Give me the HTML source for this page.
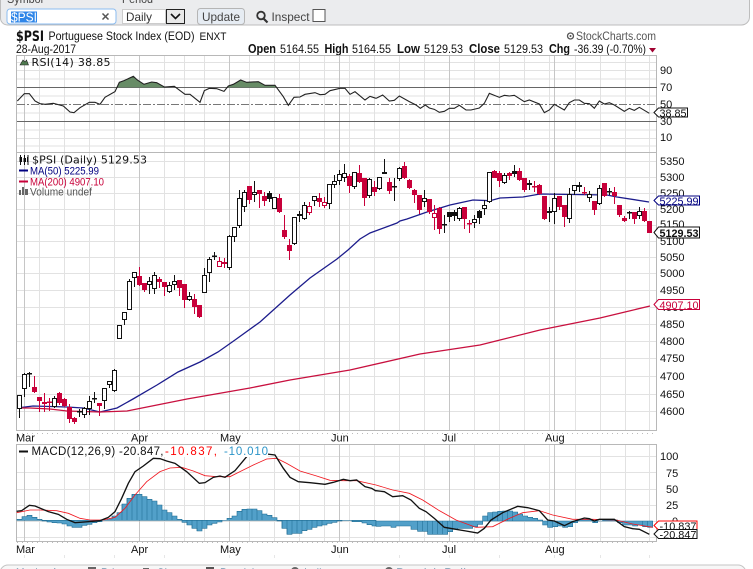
<!DOCTYPE html>
<html>
<head>
<meta charset="utf-8">
<title>$PSI</title>
<style>
html,body{margin:0;padding:0;background:#fff;width:753px;height:569px;overflow:hidden}
svg{display:block;position:absolute;left:0;top:0}
text{font-family:"Liberation Sans",sans-serif;fill:#111}
.ax{font-size:11px}
.b{font-weight:bold;font-size:13px}
.v{font-size:12px}
</style>
</head>
<body>
<svg width="753" height="569" viewBox="0 0 753 569" xmlns="http://www.w3.org/2000/svg">
<!-- top toolbar -->
<path d="M-2 -2H749.500V17a8 8 0 0 1-8 8H7.500a7 7 0 0 1-7-7V-2z" fill="#ebecee" stroke="#bdbdbd"/>
<text x="7" y="3" font-size="12" style="fill:#444" textLength="36" lengthAdjust="spacingAndGlyphs">Symbol</text>
<rect x="7" y="9" width="109" height="15" rx="3" fill="#fff" stroke="#8bbcf0"/>
<rect x="11" y="11.500" width="26" height="11" fill="#2f86e8"/>
<text x="11" y="21.500" font-size="13" style="fill:#fff" textLength="26" lengthAdjust="spacingAndGlyphs">$PSI</text>
<path d="M102.500 13.500l6 6M108.500 13.500l-6 6" stroke="#555" stroke-width="1.500" fill="none"/>
<text x="122" y="3" font-size="12" style="fill:#444" textLength="31" lengthAdjust="spacingAndGlyphs">Period</text>
<rect x="122.500" y="9.500" width="43" height="14" fill="#fff" stroke="#ccc"/>
<text x="126" y="21" font-size="12" style="fill:#333" textLength="26" lengthAdjust="spacingAndGlyphs">Daily</text>
<rect x="166.500" y="9.500" width="18" height="14" fill="#e8e8e8" stroke="#222"/>
<path d="M171 14l4.500 4.500 4.500-4.500" stroke="#111" stroke-width="1.600" fill="none"/>
<rect x="197.500" y="8.500" width="47" height="16" rx="3" fill="#e6ecf3" stroke="#b5b5b5"/>
<text x="202" y="21" font-size="12" style="fill:#444" textLength="38" lengthAdjust="spacingAndGlyphs">Update</text>
<circle cx="261" cy="15.500" r="3.800" fill="none" stroke="#333" stroke-width="1.800"/>
<path d="M263.500 18.500l4 4" stroke="#333" stroke-width="2.200"/>
<text x="271.500" y="21" font-size="12" style="fill:#444" textLength="38" lengthAdjust="spacingAndGlyphs">Inspect</text>
<rect x="313" y="9.500" width="12" height="12" fill="#fff" stroke="#555"/>

<!-- heading -->
<text x="16" y="41" font-size="14" font-weight="bold" style="font-family:'DejaVu Sans',sans-serif" textLength="28" lengthAdjust="spacingAndGlyphs">$PSI</text>
<text x="48.500" y="40" font-size="12" textLength="146" lengthAdjust="spacingAndGlyphs">Portuguese Stock Index (EOD)</text>
<text x="199.500" y="40" font-size="11" textLength="27" lengthAdjust="spacingAndGlyphs">ENXT</text>
<circle cx="570.500" cy="36" r="3" fill="none" stroke="#555" stroke-width="1.300"/>
<circle cx="570.500" cy="36" r="1" fill="#555"/>
<text x="576" y="40" font-size="12" style="fill:#555" textLength="80" lengthAdjust="spacingAndGlyphs">StockCharts.com</text>
<text x="16" y="53" font-size="11.500" textLength="60" lengthAdjust="spacingAndGlyphs">28-Aug-2017</text>
<text x="248" y="53" class="b" textLength="28" lengthAdjust="spacingAndGlyphs">Open</text>
<text x="280" y="53" class="v" textLength="39" lengthAdjust="spacingAndGlyphs">5164.55</text>
<text x="324.500" y="53" class="b" textLength="24" lengthAdjust="spacingAndGlyphs">High</text>
<text x="352" y="53" class="v" textLength="39" lengthAdjust="spacingAndGlyphs">5164.55</text>
<text x="397" y="53" class="b" textLength="23" lengthAdjust="spacingAndGlyphs">Low</text>
<text x="424" y="53" class="v" textLength="39" lengthAdjust="spacingAndGlyphs">5129.53</text>
<text x="469" y="53" class="b" textLength="31" lengthAdjust="spacingAndGlyphs">Close</text>
<text x="504" y="53" class="v" textLength="39" lengthAdjust="spacingAndGlyphs">5129.53</text>
<text x="549" y="53" class="b" textLength="21" lengthAdjust="spacingAndGlyphs">Chg</text>
<text x="574" y="53" class="v" textLength="72" lengthAdjust="spacingAndGlyphs">-36.39 (-0.70%)</text>
<path d="M649 48h7l-3.500 4.500z" fill="#a00030"/>

<!-- grid minor -->
<g fill="none" stroke="#e2e2e2" stroke-width="1">
<path d="M17 62.500H657M17 79H657M17 96H657M17 113H657M17 130H657M17 138.500H657M17 146H657M17 70.500H657"/>
<path d="M17 161.500H657M17 177.500H657M17 193.500H657M17 209.500H657M17 225.500H657M17 241.500H657M17 257.500H657M17 273.500H657M17 290.500H657M17 307.500H657M17 324.500H657M17 341.500H657M17 358.500H657M17 376.500H657M17 394.500H657M17 411.500H657"/>
<path d="M17 456.500H657M17 472.500H657M17 489.500H657M17 505.500H657M17 521.500H657M17 537.500H657"/>
<path d="M39.500 55V430M64.500 55V430M89.500 55V430M114.500 55V430M164.500 55V430M184.500 55V430M204.500 55V430M249.500 55V430M274.500 55V430M299.500 55V430M324.500 55V430M349.500 55V430M374.500 55V430M399.500 55V430M424.500 55V430M474.500 55V430M499.500 55V430M524.500 55V430M549.500 55V430M575.500 55V430M600.500 55V430M625.500 55V430M649.500 55V430"/>
<path d="M39.500 445V541M64.500 445V541M89.500 445V541M114.500 445V541M164.500 445V541M184.500 445V541M204.500 445V541M249.500 445V541M274.500 445V541M299.500 445V541M324.500 445V541M349.500 445V541M374.500 445V541M399.500 445V541M424.500 445V541M474.500 445V541M499.500 445V541M524.500 445V541M549.500 445V541M575.500 445V541M600.500 445V541M625.500 445V541M649.500 445V541"/>
</g>
<!-- grid major -->
<path d="M24.500 55V430M139.500 55V430M229.500 55V430M339.500 55V430M449.500 55V430M554.500 55V430M24.500 445V541M139.500 445V541M229.500 445V541M339.500 445V541M449.500 445V541M554.500 445V541" stroke="#c6c6c6" fill="none"/>
<!-- frames -->
<path d="M16.500 55.500H657M16.500 152.500H657M16.500 430.500H657M16.500 444.500H657M16.500 541.500H657M16.500 55V431M16.500 444V542M656.500 55V431M656.500 444V542" stroke="#b8b8b8" fill="none"/>
<path d="M17 433.500H657M17 542.500H657" stroke="#bbb" stroke-dasharray="1 4" fill="none"/>
<path d="M24.500 555V558M64.500 555V558M114.500 555V558M164.500 555V558M229.500 555V558M274.500 555V558M339.500 555V558M399.500 555V558M449.500 555V558M499.500 555V558M554.500 555V558M600.500 555V558M649.500 555V558" stroke="#e6e6e6" fill="none"/>

<!-- RSI -->
<path d="M17 87.500H657M17 121.500H657" stroke="#666" fill="none"/>
<path d="M17 104.500H657" stroke="#777" stroke-dasharray="8 2 2 2" fill="none"/>
<g transform="scale(.33333)">
<path d="M352 262L358 247 372 242 400 229 412 240 432 253 455 246 470 248 493 262zM680 262L685 258 700 253 722 240 740 247 775 245 795 256 825 256 830 262z" fill="#678c66"/>
<path d="M52 303L73 281 88 281 105 303 120 311 135 313 160 310 190 318 210 336 222 338 240 323 268 307 285 307 300 313 315 292 345 275 358 247 372 242 400 229 412 240 432 253 455 246 470 248 493 261 523 259 555 283 570 283 600 307 613 272 628 265 650 266 672 274 685 258 700 253 722 240 740 247 775 245 795 256 825 256 850 290 865 316 882 292 900 291 915 283 945 278 960 284 975 283 990 272 1020 265 1035 265 1050 283 1065 275 1095 300 1110 289 1128 295" fill="none" stroke="#222" stroke-width="3.300"/>
</g>
<g transform="translate(376 0) scale(.33333)">
<path d="M0 295L20 285 40 303 55 301 70 288 100 305 120 315 133 325 148 315 160 324 175 328 190 337 205 334 220 325 235 325 250 316 270 330 285 330 310 324 325 310 340 280 370 292 385 286 400 288 415 286 445 305 460 300 490 312 505 338 520 330 535 313 565 330 580 308 595 300 610 300 625 310 640 311 655 325 670 303 685 312 700 308 715 315 745 334 760 325 775 331 790 322 820 340" fill="none" stroke="#222" stroke-width="3.300"/>
</g>
<path d="M20 65l3-5 2 2 1.500-2 2 5z" fill="#4f7a4f" stroke="#222" stroke-width=".6"/>
<text x="31.500" y="66" font-size="11" style="font-family:'DejaVu Sans',sans-serif" textLength="79" lengthAdjust="spacing">RSI(14) 38.85</text>

<!-- MA lines -->
<path d="M17 408L33 406 67 407 83 408 100 412 117 408 133 399 157 385 178 372 200 362 218 352 235 340 260 322 290 295 310 278 337 259 348 250 360 239 370 233 397 223 400 221 407 219 427 212 450 205 473 200 490 200.700 500 198 523 197 540 194 607 195 617 197 649 202" fill="none" stroke="#1c1c8c" stroke-width="1.300"/>
<path d="M17 408L30 408 50 409 67 411 100 412 127 411 147 407 187 399 250 388 290 380 350 370 420 354 480 345 500 340 540 330 600 318 625 312 650 306" fill="none" stroke="#c8103f" stroke-width="1.300"/>

<!-- candles: black wicks -->
<path fill="none" stroke="#111" stroke-width="1" d="M19.500 395V418M24.500 373V397M29.500 372V387M54.500 396V408M79.500 409V417M84.500 407V418M89.500 396V415M94.500 392V403M104.500 388V409M109.500 381V388M114.500 369V392M119.500 325V339M124.500 312V325M129.500 279V310M134.500 272V287M149.500 277V294M154.500 272V294M169.500 282V293M174.500 275V290M189.500 292V301M204.500 268V293M209.500 257V282M214.500 252V260M229.500 235V270M234.500 227V242M239.500 190V228M244.500 190V212M254.500 181V202M269.500 191V202M274.500 197V209M294.500 217V245M299.500 211V222M304.500 202V220M314.500 196V206M329.500 184V209M334.500 175V188M339.500 170V185M344.500 164V182M354.500 172V189M369.500 178V198M379.500 177V190M384.500 159V174M394.500 178V201M399.500 167V181M424.500 190V207M444.500 215V233M449.500 212V222M454.500 210V221M459.500 207V221M474.500 215V228M479.500 210V224M484.500 200V215M489.500 172V203M504.500 173V184M514.500 165V177M529.500 180V190M549.500 207V222M554.500 193V224M569.500 188V223M574.500 185V195M579.500 182V192M589.500 191V202M599.500 185V205M609.500 188V195M629.500 211V219M639.500 207V219"/>
<!-- red wicks -->
<path fill="none" stroke="#c8003a" stroke-width="1" d="M34.500 376V393M39.500 397V412M44.500 393V412M49.500 398V411M59.500 392V405M64.500 398V407M69.500 404V423M74.500 417V424M99.500 403V416M139.500 267V286M144.500 283V292M159.500 277V288M164.500 282V296M179.500 280V296M184.500 284V308M194.500 294V314M199.500 305V318M219.500 257V267M224.500 258V268M249.500 186V204M259.500 190V208M264.500 192V206M279.500 194V213M284.500 215V239M289.500 239V260M309.500 202V215M319.500 193V207M324.500 197V208M349.500 174V193M359.500 165V183M364.500 178V206M374.500 181V196M389.500 178V194M404.500 162V179M409.500 179V189M414.500 189V203M419.500 195V214M429.500 199V214M434.500 205V230M439.500 207V234M464.500 207V229M469.500 220V233M494.500 170V178M499.500 171V187M509.500 172V180M519.500 168V181M524.500 178V192M534.500 181V192M539.500 184V195M544.500 196V220M559.500 196V210M564.500 205V227M584.500 187V195M594.500 201V215M604.500 183V197M614.500 187V204M619.500 205V217M624.500 216V222M634.500 212V224M644.500 208V222M649.500 221V233"/>
<!-- hollow black bodies -->
<path fill="#fff" stroke="#111" stroke-width="1" d="M17.500 395.500h4v13h-4zM22.500 374.500h4v14h-4zM52.500 398.500h4v8h-4zM82.500 408.500h4v6h-4zM87.500 401.500h4v7h-4zM102.500 388.500h4v12h-4zM107.500 381.500h4v3h-4zM112.500 370.500h4v20h-4zM117.500 325.500h4v13h-4zM122.500 312.500h4v7h-4zM127.500 281.500h4v28h-4zM132.500 272.500h4v5h-4zM147.500 281.500h4v3h-4zM152.500 275.500h4v13h-4zM167.500 285.500h4v6h-4zM172.500 281.500h4v3h-4zM187.500 296.500h4v3h-4zM202.500 275.500h4v17h-4zM207.500 259.500h4v13h-4zM227.500 236.500h4v31h-4zM232.500 227.500h4v9h-4zM237.500 198.500h4v27h-4zM242.500 192.500h4v14h-4zM252.500 192.500h4v2h-4zM272.500 197.500h4v11h-4zM292.500 217.500h4v26h-4zM302.500 205.500h4v13h-4zM312.500 196.500h4v4h-4zM327.500 184.500h4v19h-4zM332.500 181.500h4v3h-4zM337.500 174.500h4v6h-4zM342.500 173.500h4v4h-4zM352.500 172.500h4v14h-4zM367.500 179.500h4v16h-4zM377.500 177.500h4v11h-4zM397.500 168.500h4v10h-4zM422.500 198.500h4v3h-4zM457.500 208.500h4v10h-4zM472.500 219.500h4v3h-4zM482.500 205.500h4v3h-4zM487.500 172.500h4v29h-4zM502.500 175.500h4v7h-4zM527.500 183.500h4v1h-4zM552.500 198.500h4v13h-4zM567.500 194.500h4v24h-4zM572.500 185.500h4v5h-4zM577.500 185.500h4v1h-4zM587.500 194.500h4v3h-4zM597.500 188.500h4v15h-4zM637.500 211.500h4v4h-4z"/>
<!-- solid black bodies -->
<path fill="#111" d="M27 373h5v1.500h-5zM77 411h5v1.500h-5zM92 398h5v1.500h-5zM212 255.500h5v1.500h-5zM267 193h5v6h-5zM297 214h5v2h-5zM382 172h5v2h-5zM392 186h5v1.500h-5zM442 224h5v1.500h-5zM447 212h5v5h-5zM452 212h5v4h-5zM477 211h5v7h-5zM512 171h5v3h-5zM547 211h5v2h-5zM607 191h5v1.500h-5zM627 212h5v1.500h-5z"/>
<!-- solid red bodies -->
<path fill="#c8003a" d="M32 387h5v5h-5zM37 397h5v4h-5zM47 401.500h5v1.500h-5zM57 393h5v10h-5zM62 399h5v7h-5zM67 407h5v12h-5zM72 418h5v4h-5zM97 403h5v3h-5zM137 276h5v9h-5zM142 283h5v7h-5zM157 279h5v3h-5zM162 282h5v5h-5zM177 280h5v8h-5zM182 284h5v16h-5zM192 299h5v8h-5zM197 305h5v12h-5zM222 262h5v2h-5zM247 186h5v14h-5zM257 190h5v4h-5zM262 196h5v5h-5zM277 198h5v14h-5zM282 230h5v7h-5zM287 245h5v6h-5zM317 198h5v4h-5zM347 176h5v10h-5zM357 173h5v9h-5zM362 178h5v20h-5zM372 187h5v5h-5zM387 182h5v9h-5zM402 166h5v12h-5zM407 180h5v8h-5zM412 190h5v5h-5zM417 195h5v15h-5zM427 199h5v13h-5zM437 208h5v21h-5zM462 207h5v12h-5zM467 223h5v1.500h-5zM492 171h5v7h-5zM497 173h5v8h-5zM507 173h5v3h-5zM517 171h5v9h-5zM522 178h5v12h-5zM532 186h5v1.500h-5zM537 185h5v9h-5zM542 196h5v23h-5zM557 196h5v11h-5zM562 205h5v12h-5zM582 192h5v1.500h-5zM592 201h5v9h-5zM602 183h5v13h-5zM612 192h5v4h-5zM617 205h5v10h-5zM622 218h5v3h-5zM632 212h5v7h-5zM642 211h5v10h-5zM647 221h5v12h-5z"/>
<!-- hollow red bodies -->
<path fill="#fff" stroke="#c8003a" stroke-width="1" d="M42.500 402.500h4v1h-4zM217.500 261.500h4v5h-4zM307.500 206.500h4v6h-4zM322.500 202.500h4v3h-4zM432.500 213.500h4v4h-4z"/>

<!-- price legend -->
<path d="M20.500 155V165M24.500 155V165M28 155V165" stroke="#111" fill="none"/>
<path d="M19.500 157h2.500v5h-2.500zM23.500 158h2.500v4h-2.500zM27 157h1.500v5h-1.500z" fill="#111"/>
<text x="32" y="163.500" font-size="11" style="font-family:'DejaVu Sans',sans-serif" textLength="115" lengthAdjust="spacing">$PSI (Daily) 5129.53</text>
<rect x="19" y="169.500" width="9" height="2" fill="#000080"/>
<text x="30" y="174.500" font-size="11" style="fill:#000080" textLength="69" lengthAdjust="spacingAndGlyphs">MA(50) 5225.99</text>
<rect x="19" y="180.500" width="9" height="2" fill="#c8003a"/>
<text x="30" y="185.500" font-size="11" style="fill:#c8003a" textLength="74" lengthAdjust="spacingAndGlyphs">MA(200) 4907.10</text>
<path d="M19 195v-5h2v5zM22 195v-8h2v8zM25 195v-6h3v6z" fill="#666"/>
<text x="30" y="195.500" font-size="11" style="fill:#555" textLength="62" lengthAdjust="spacingAndGlyphs">Volume undef</text>

<!-- MACD histogram -->
<g transform="translate(0 440) scale(.33333)">
<path fill="#52a0c9" stroke="#1f6c93" stroke-width="1.800" d="M51 241V238H66V230H81V226H96V232H111V238H126V243H141V246H156V248H171V249H186V252H201V258H216V262H231V262H246V256H261V253H276V248H291V245H306V241H321V237H336V228H351V218H366V192H381V175H396V163H411V163H426V170H441V178H456V183H471V195H486V210H501V218H516V228H531V238H546V241V247H561V255H576V265H591V273H606V265H621V255H636V250H651V246H666V241H681V235H696V228H711V214H726V208H741V207H771V212H786V222H801V226H816V233H831V241V243H846V265H861V283H876V280H906V272H921V268H936V262H951V258H966V255H981V250H996V247H1011V243H1026V241H1056V245H1086V249H1101V254H1116V258H1128V241z"/>
<path fill="none" stroke="#1f6c93" stroke-width="1.600" d="M366 241V192M381 241V175M396 241V163M411 241V163M426 241V170M441 241V178M456 241V183M471 241V195M486 241V210M501 241V218M516 241V228M561 241V255M576 241V265M591 241V273M606 241V265M621 241V255M726 241V208M741 241V207M756 241V207M771 241V212M786 241V222M846 241V265M861 241V283M876 241V280M891 241V280M906 241V272M921 241V268M936 241V262M951 241V258M966 241V255"/>
<path fill="none" stroke="#f01820" stroke-width="2.500" d="M50 218L90 210 120 210 170 212 205 220 240 235 270 240 310 240 345 232 375 205 405 165 440 125 480 95 510 84 545 82 580 93 615 107 650 110 690 110 720 95 760 75 800 57 830 55 860 70 900 93 950 108 990 121 1030 122 1070 122 1128 135"/>
<path fill="none" stroke="#111" stroke-width="4" d="M50 214L65 212 88 196 105 198 145 215 175 223 200 238 225 248 265 245 300 242 325 232 345 215 365 175 385 130 405 95 430 78 460 55 480 56 500 63 525 70 560 95 598 130 615 128 640 112 660 108 675 112 705 92 740 50 770 35 800 42 825 45 850 85 870 112 895 125 930 128 975 133 1000 127 1030 118 1050 122 1070 120 1095 140 1115 145 1128 153"/>
</g>
<g transform="translate(376 440) scale(.33333)">
<path fill="#52a0c9" stroke="#1f6c93" stroke-width="1.800" d="M0 243V259H15V258H45V262H60V258H105V268H125V274H155V283H215V275H230V268H245V265H290V260H305V253H320V243V228H335V218H350V216H365V214H380V213H410V216H425V222H440V228H455V232H470V235H485V240H500V255H515V262H530V260H545V258H560V262H575V260H590V248H605V238H650V248H665V243H680V240H725V248H740V255H770V258H785V255H800V260H815V262H830V243z"/>
<path fill="none" stroke="#1f6c93" stroke-width="1.600" d="M125 243V274M140 243V274M155 243V283M170 243V283M185 243V283M200 243V283M215 243V275M230 243V268M335 243V228M350 243V218M365 243V216M380 243V214M395 243V213M410 243V216M515 243V262M530 243V260M545 243V258M800 243V260M815 243V262"/>
<path fill="none" stroke="#f01820" stroke-width="2.500" d="M0 135L50 150 100 160 140 180 190 212 240 240 300 262 350 260 400 235 440 218 490 212 530 225 590 238 650 238 720 240 770 252 830 262"/>
<path fill="none" stroke="#111" stroke-width="4" d="M0 152L25 155 50 170 80 167 105 180 130 205 150 215 175 235 205 262 240 268 270 273 305 279 325 265 345 240 380 218 425 199 455 203 490 212 515 240 535 243 565 257 590 245 625 234 640 236 655 243 670 238 715 238 745 260 770 266 790 268 820 283"/>
</g>
<!-- MACD legend -->
<rect x="17" y="445" width="251" height="12" fill="#fff"/>
<rect x="19" y="450.500" width="9" height="2" fill="#111"/>
<text x="31.500" y="455" font-size="11.500" textLength="132" lengthAdjust="spacing">MACD(12,26,9) -20.847,</text>
<text x="165" y="455" font-size="11.500" style="fill:#f00" textLength="52" lengthAdjust="spacing">-10.837,</text>
<text x="224" y="455" font-size="11.500" style="fill:#2a94c8" textLength="44" lengthAdjust="spacing">-10.010</text>

<!-- axis labels -->
<g class="ax">
<text x="660" y="74">90</text><text x="660" y="91">70</text><text x="660" y="108">50</text><text x="660" y="125">30</text><text x="660" y="141">10</text>
<text x="660" y="165">5350</text><text x="660" y="181">5300</text><text x="660" y="197">5250</text><text x="660" y="213">5200</text><text x="660" y="228">5150</text><text x="660" y="245">5100</text><text x="660" y="261">5050</text><text x="660" y="277">5000</text><text x="660" y="294">4950</text><text x="660" y="311">4900</text><text x="660" y="328">4850</text><text x="660" y="345">4800</text><text x="660" y="362">4750</text><text x="660" y="380">4700</text><text x="660" y="398">4650</text><text x="660" y="415">4600</text>
<text x="660" y="460">100</text><text x="666" y="477">75</text><text x="666" y="493">50</text><text x="666" y="509">25</text><text x="672" y="525">0</text>
<text x="16" y="441.500">Mar</text><text x="131" y="441.500">Apr</text><text x="220" y="441.500">May</text><text x="331" y="441.500">Jun</text><text x="442" y="441.500">Jul</text><text x="545" y="441.500">Aug</text>
<text x="16" y="553">Mar</text><text x="131" y="553">Apr</text><text x="220" y="553">May</text><text x="331" y="553">Jun</text><text x="442" y="553">Jul</text><text x="545" y="553">Aug</text>
</g>

<!-- value tags -->
<path d="M654 112.500l4.500-4.500H687.500v9H658.500z" fill="#fff" stroke="#111"/>
<text x="659.500" y="117" font-size="11" textLength="27" lengthAdjust="spacingAndGlyphs">38.85</text>
<path d="M654 200.500l4.500-4.500H699.500v9H658.500z" fill="#fff" stroke="#000080"/>
<text x="659.500" y="205" font-size="11" style="fill:#000080" textLength="39" lengthAdjust="spacingAndGlyphs">5225.99</text>
<path d="M654 232.500l4.500-5.500H699.500v11H658.500z" fill="#fff" stroke="#111"/>
<text x="659.500" y="237" font-size="11" font-weight="bold" textLength="39" lengthAdjust="spacingAndGlyphs">5129.53</text>
<path d="M654 304.500l4.500-5H699.500v10H658.500z" fill="#fff" stroke="#c8003a"/>
<text x="659.500" y="309" font-size="11" style="fill:#c8003a" textLength="39" lengthAdjust="spacingAndGlyphs">4907.10</text>
<path d="M654 525.500l4.500-4.500H697v9H658.500z" fill="#fff" stroke="#f00"/>
<text x="659.500" y="530" font-size="11" textLength="37" lengthAdjust="spacingAndGlyphs">-10.837</text>
<path d="M654 534l4.500-4.500H697v9H658.500z" fill="#fff" stroke="#111"/>
<text x="659.500" y="538.500" font-size="11" textLength="37" lengthAdjust="spacingAndGlyphs">-20.847</text>

<!-- bottom panel -->
<path d="M0 575v-2a8 8 0 0 1 8-8H738a8 8 0 0 1 8 8v2" fill="#f7f7f7" stroke="#c4c4c4"/>
<g font-size="12">
<text x="16" y="577" style="fill:#2a5f86" textLength="47" lengthAdjust="spacingAndGlyphs">Moving Av</text>
<text x="101" y="577" style="fill:#2a5f86" textLength="25" lengthAdjust="spacingAndGlyphs">Price</text>
<text x="157" y="577" style="fill:#2a5f86" textLength="30" lengthAdjust="spacingAndGlyphs">Share</text>
<text x="220" y="577" style="fill:#2a5f86" textLength="38" lengthAdjust="spacingAndGlyphs">Bearish</text>
<text x="304" y="577" style="fill:#2a5f86" textLength="47" lengthAdjust="spacingAndGlyphs">Indicators</text>
<text x="396" y="577" style="fill:#2a5f86" textLength="70" lengthAdjust="spacingAndGlyphs">Bearish Bull</text>
</g>
<rect x="88" y="567" width="8" height="4" fill="#666"/>
<rect x="143" y="568" width="6" height="3" fill="#666"/>
<rect x="206" y="567" width="8" height="4" fill="#555"/>
<circle cx="295" cy="571" r="4" fill="#666"/>
<circle cx="389" cy="571" r="4" fill="#666"/>
</svg>
</body>
</html>
